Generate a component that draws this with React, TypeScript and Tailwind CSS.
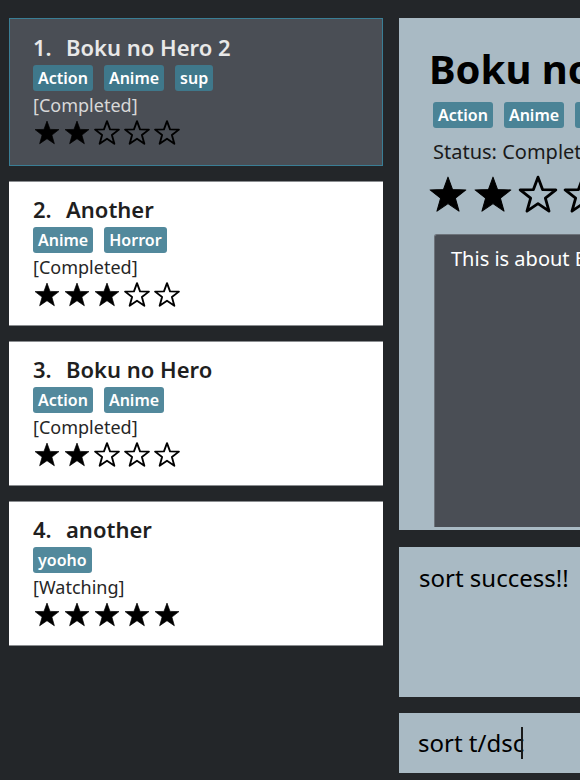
import React from "react";

const font = { fontFamily: '"Noto Sans", "Open Sans", sans-serif' };

function Star({ filled, size }: { filled: boolean; size: number }) {
  return (
    <svg width={size} height={size} viewBox="0 0 24 24" className="shrink-0">
      <path
        d="M12 1.8 L14.6 8.9 L22.2 9.1 L16.2 13.8 L18.3 21.2 L12 16.9 L5.7 21.2 L7.8 13.8 L1.8 9.1 L9.4 8.9 Z"
        fill={filled ? "#000" : "none"}
        stroke="#000"
        strokeWidth={filled ? 0.6 : 1.6}
        strokeLinejoin="round"
      />
    </svg>
  );
}

function Stars({ n, size, gap }: { n: number; size: number; gap: string }) {
  return (
    <div className={`flex ${gap}`}>
      {[0, 1, 2, 3, 4].map((i) => (
        <Star key={i} filled={i < n} size={size} />
      ))}
    </div>
  );
}

type Item = { title: string; tags: string[]; status: string; rating: number };

const items: Item[] = [
  { title: "Boku no Hero 2", tags: ["Action", "Anime", "sup"], status: "Completed", rating: 2 },
  { title: "Another", tags: ["Anime", "Horror"], status: "Completed", rating: 3 },
  { title: "Boku no Hero", tags: ["Action", "Anime"], status: "Completed", rating: 2 },
  { title: "another", tags: ["yooho"], status: "Watching", rating: 5 },
];

function Card({ item, idx, selected }: { item: Item; idx: number; selected: boolean }) {
  return (
    <div
      className={
        selected
          ? "h-[148px] bg-[#4a4e55] border border-[#3a7e95] pl-[23px] pt-[13px]"
          : "h-[145px] bg-white border-t border-b border-t-[#8a8d90] border-b-[#8a8d90] pl-[24px] pt-[12px]"
      }
    >
      <div
        className={`flex text-[22px] font-semibold leading-[30px] ${
          selected ? "text-[#e8e8e8]" : "text-[#1f1f1f]"
        }`}
      >
        <span className="w-[33px]">{idx}.</span>
        <span>{item.title}</span>
      </div>
      <div className="flex gap-[11px] mt-[3px]">
        {item.tags.map((t) => (
          <span
            key={t}
            className={`h-[26px] px-[5px] rounded-[3px] text-white text-[16px] font-semibold leading-[26px] ${
              selected ? "bg-[#3f788b]" : "bg-[#52899c]"
            }`}
          >
            {t}
          </span>
        ))}
      </div>
      <div
        className={`text-[18px] leading-[26px] mt-[1px] ${
          selected ? "text-[#d8d8d8]" : "text-[#262626]"
        }`}
      >
        [{item.status}]
      </div>
      <div className="mt-[1px]">
        <Stars n={item.rating} size={28} gap="gap-[2px]" />
      </div>
    </div>
  );
}

export default function App() {
  return (
    <div className="w-[580px] h-[780px] overflow-hidden bg-[#232629]" style={font}>
      <div className="flex pt-[18px] pl-[9px] gap-[16px] w-[1000px]">
        <div className="w-[374px] flex flex-col gap-[15px]">
          {items.map((it, i) => (
            <Card key={i} item={it} idx={i + 1} selected={i === 0} />
          ))}
        </div>
        <div className="w-[420px] flex flex-col">
          <div className="h-[512px] bg-[#a9bac4] pl-[30px] pt-[25px] flex flex-col">
            <div className="text-[40px] font-bold leading-[52px] text-black whitespace-nowrap">
              Boku no Hero 2
            </div>
            <div className="flex gap-[11px] mt-[7px] pl-[4px]">
              {["Action", "Anime", "sup"].map((t) => (
                <span
                  key={t}
                  className="h-[26px] px-[5px] rounded-[3px] bg-[#4a8396] text-white text-[16px] font-semibold leading-[26px]"
                >
                  {t}
                </span>
              ))}
            </div>
            <div className="text-[20px] leading-[30px] text-[#1a1a1a] mt-[9px] pl-[4px] whitespace-nowrap">
              Status: Completed
            </div>
            <div className="mt-[7px] -ml-[2px]">
              <Stars n={2} size={42} gap="gap-[3px]" />
            </div>
            <div className="mt-[18px] ml-[5px] flex-1 mb-[3px] bg-[#4a4e55] border-l border-t border-[#6d737a] rounded-tl-[3px] pl-[16px] pt-[9px]">
              <div className="text-[20px] leading-[30px] text-white whitespace-nowrap">
                This is about Boku no Hero 2
              </div>
            </div>
          </div>
          <div className="h-[150px] mt-[17px] bg-[#a9bac4] pl-[20px] pt-[14px]">
            <div className="text-[24px] leading-[34px] text-black whitespace-nowrap">sort success!!</div>
          </div>
          <div className="h-[60px] mt-[16px] bg-[#a9bac4] pl-[19px] flex items-center">
            <span className="text-[24px] leading-[32px] text-black whitespace-nowrap">sort t/dsc</span>
            <span className="w-[2px] h-[32px] bg-[#1a1a1a] -ml-[3px]" />
          </div>
        </div>
      </div>
    </div>
  );
}
